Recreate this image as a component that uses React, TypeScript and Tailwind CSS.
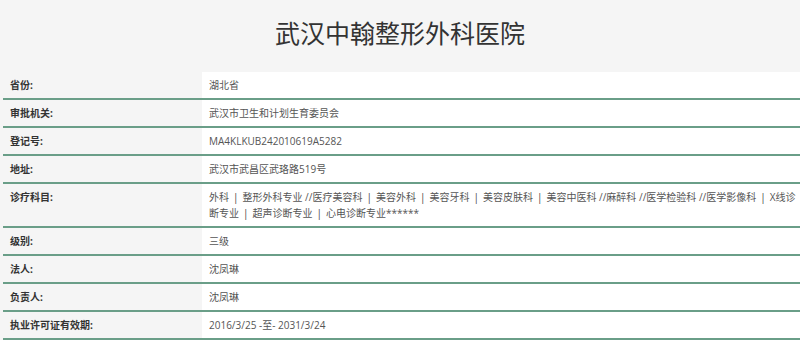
import { Fragment } from 'react';

const departments = [
  '外科',
  '整形外科专业 //医疗美容科',
  '美容外科',
  '美容牙科',
  '美容皮肤科',
  '美容中医科 //麻醉科 //医学检验科 //医学影像科',
  'X线诊断专业',
  '超声诊断专业',
  '心电诊断专业******',
];

const rows: { label: string; value: React.ReactNode }[] = [
  { label: '省份:', value: '湖北省' },
  { label: '审批机关:', value: '武汉市卫生和计划生育委员会' },
  { label: '登记号:', value: 'MA4KLKUB242010619A5282' },
  { label: '地址:', value: '武汉市武昌区武珞路519号' },
  {
    label: '诊疗科目:',
    value: departments.map((d, i) => (
      <Fragment key={d}>
        {i > 0 && <span className="mx-[4px] text-[#444]">|</span>}
        {d}
      </Fragment>
    )),
  },
  { label: '级别:', value: '三级' },
  { label: '法人:', value: '沈凤琳' },
  { label: '负责人:', value: '沈凤琳' },
  { label: '执业许可证有效期:', value: '2016/3/25 -至- 2031/3/24' },
];

export default function App() {
  return (
    <div className="w-[800px] h-[340px] overflow-hidden bg-[#f5f5f5] font-['Open_Sans','Noto_Sans_CJK_SC',sans-serif]">
      {/* 标题 */}
      <div className="h-[72px] flex items-center justify-center">
        <h1 className="text-[25px] leading-none text-[#333] mb-[8px] font-['Noto_Sans_CJK_SC',sans-serif]">
          武汉中翰整形外科医院
        </h1>
      </div>

      {/* 信息表 */}
      <div className="pl-[3px]">
        {rows.map((row) => (
          <div key={row.label} className="flex border-b-2 border-[#6a9e88]">
            <div className="w-[199px] shrink-0 pl-[7px] py-[5px] text-[10px] leading-[16px] font-bold text-[#333]">
              {row.label}
            </div>
            <div className="flex-1 bg-white pl-[7px] pr-[2px] py-[5px] text-[10px] leading-[16px] text-[#555]">
              {row.value}
            </div>
          </div>
        ))}
      </div>
    </div>
  );
}
